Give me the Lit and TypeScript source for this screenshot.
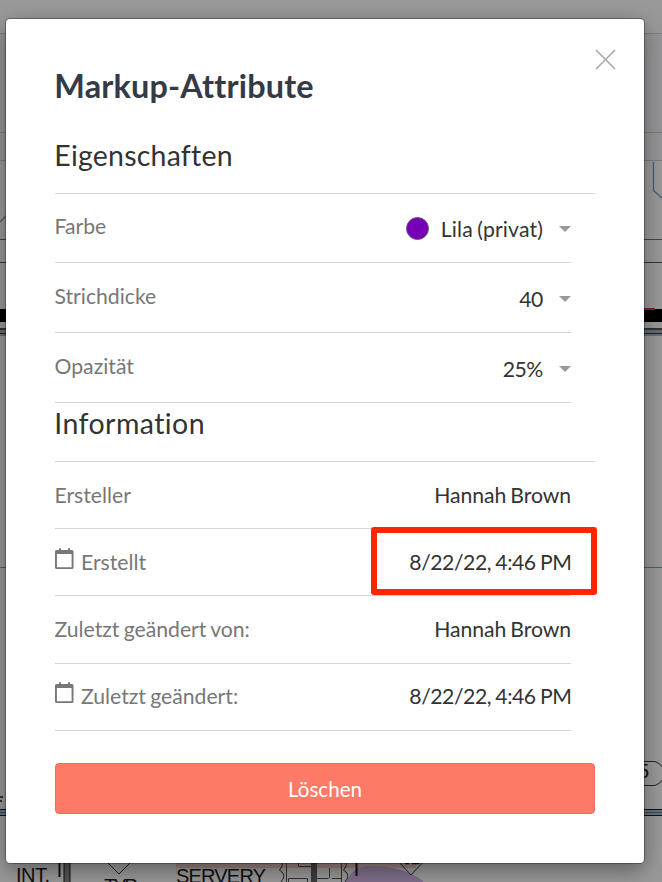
import { LitElement, html, css, svg, nothing } from "lit";
import { customElement, property } from "lit/decorators.js";

@customElement("plan-backdrop")
class PlanBackdrop extends LitElement {
  static styles = css`
    :host { display: block; }
    svg { display: block; width: 100%; height: 100%; }
    .label { font-family: "Liberation Sans", Arial, sans-serif; font-size: 20px; fill: #111; }
  `;

  private rule(y: number, h: number, fill: string) {
    return svg`<rect x="0" y=${y} width="662" height=${h} fill=${fill}></rect>`;
  }

  render() {
    return html`
      <svg viewBox="0 0 662 882">
        <rect width="662" height="882" fill="#999"></rect>
        <rect y="34" width="662" height="126" fill="#959597"></rect>
        ${this.rule(33, 1, "#7d7d80")}
        ${this.rule(132, 1, "#7c7c7e")}
        ${this.rule(160, 1, "#7c7c7e")}
        ${this.rule(239, 1, "#444")}
        ${this.rule(262, 1, "#333")}
        ${this.rule(309, 13, "#000")}
        <rect x="640" y="308" width="15" height="2" fill="#7a2226"></rect>
        ${this.rule(328, 2, "#333")}
        ${this.rule(330, 3, "#666c70")}
        ${this.rule(333, 1, "#222")}
        ${this.rule(334, 2, "#5f7180")}
        ${this.rule(567, 1, "#4a6178")}
        ${this.rule(809, 1, "#111")}
        ${this.rule(810, 5, "#66737c")}
        ${this.rule(812, 1, "#2c4c66")}
        ${this.rule(815, 1, "#111")}
        <path d="M653.5 162V190.500L662 198M0 222L8 214" fill="none" stroke="#425c77" stroke-width="1.300"></path>
        <path d="M640 761.500H655Q660 763 663 768M640 785.500H655Q660 784 663 779" fill="none" stroke="#222"></path>
        <text class="label" x="638" y="778">5</text>
        <path d="M0 797H3M0 801H2" stroke="#111" stroke-width="1.500"></path>
        <rect x="176" y="860" width="240" height="8" fill="#98807f"></rect>
        <path d="M346 882C351 872 357 866 370 866C390 866 410 870 424 882Z" fill="#806f8c"></path>
        <path d="M59.500 860V877" stroke="#111" stroke-width="2"></path>
        <rect x="64" y="860" width="6" height="22" fill="#555"></rect>
        <path d="M64 860V882M70 860V882" stroke="#111"></path>
        <path d="M105 860L119 874L133 860M397 860L411 875L425 860" fill="none" stroke="#222"></path>
        <path d="M405 863.500H409M412 863.500H419" stroke="#111" stroke-width="1.500"></path>
        <path d="M280 860Q284 864 281 868Q278 870 282 872Q286 876 281 882M344 860Q348 864 345 868Q342 870 346 872Q350 876 345 882" fill="none" stroke="#222"></path>
        <path d="M286.500 882V862M298.500 862V866.500H312M288.500 882V878.500H307.500V882M317 878.500H328.500M329.500 868V878M332 878.500H342M341.500 862V882" fill="none" stroke="#333"></path>
        <rect x="311" y="860" width="6" height="22" fill="#3c3c3c"></rect>
        <path d="M356.500 860V876" stroke="#111" stroke-width="2"></path>
        <text class="label" x="16" y="882" textLength="34">INT.</text>
        <text class="label" x="104" y="893" textLength="34">TYP.</text>
        <text class="label" x="176" y="883" textLength="90">SERVERY</text>
      </svg>
    `;
  }
}

@customElement("attribute-row")
class AttributeRow extends LitElement {
  @property() label = "";
  @property() value = "";
  @property() swatch = "";
  @property({ type: Boolean }) select = false;
  @property({ type: Boolean }) calendar = false;
  @property({ type: Boolean }) marked = false;

  static styles = css`
    :host {
      display: flex;
      position: relative;
      box-sizing: border-box;
      justify-content: space-between;
      align-items: center;
      margin-right: 24px;
      border-bottom: 1px solid #d6d6d6;
      font-size: 21.2px;
      line-height: 26px;
      word-spacing: -1.2px;
      color: #333;
    }
    .label { display: flex; margin-left: -0.5px; color: #777; }
    .cal { width: 19px; height: 22px; margin: -1px 7.5px 0 0; display: block; }
    .value { display: flex; align-items: center; }
    :host([select]) .label { margin-top: -4px; }
    :host([select]) .value { margin-top: 3px; }
    :host([swatch]) .value { margin-top: 2px; }
    .text { letter-spacing: -0.08px; }
    .date { letter-spacing: -0.46px; word-spacing: -0.7px; margin-right: -0.4px; }
    :host([select]:not([swatch])) .text { letter-spacing: -0.6px; margin-right: 0.4px; }
    :host([swatch]) .text { letter-spacing: 0.15px; }
    .dot {
      box-sizing: border-box;
      width: 23px;
      height: 23px;
      margin: -2px 12px 0 0;
      border-radius: 50%;
      border: 1px solid #6c5a80;
    }
    .caret {
      margin: -1px 0 0 16px;
      border: 6px solid transparent;
      border-top-color: #999;
      border-bottom: 0;
    }
    .mark {
      position: absolute;
      inset: -2px -25.5px 0 315.5px;
      border: 6px solid #fd2600;
      border-radius: 3px;
    }
  `;

  render() {
    return html`
      <div class="label">
        ${this.calendar
          ? html`<svg class="cal" viewBox="0 0 19 22">
              <path d="M4 1Q4 0 5 0T6 1V2H13V1Q13 0 14 0T15 1V2H17Q18.500 2 18.500 3.500V19.500Q18.500 21 17 21H1.500Q0 21 0 19.500V3.500Q0 2 1.500 2H4ZM1.900 6V19.200H16.600V6Z" fill="#777" fill-rule="evenodd"></path>
            </svg>`
          : nothing}
        <span class="name">${this.label}</span>
      </div>
      <div class="value">
        ${this.swatch ? html`<span class="dot" style="background:${this.swatch}"></span>` : nothing}
        <span class=${this.calendar ? "text date" : "text"}>${this.value}</span>
        ${this.select ? html`<span class="caret"></span>` : nothing}
      </div>
      ${this.marked ? html`<div class="mark"></div>` : nothing}
    `;
  }
}

@customElement("app-root")
class AppRoot extends LitElement {
  static styles = css`
    :host {
      display: flex;
      position: relative;
      box-sizing: border-box;
      width: 662px;
      height: 882px;
      padding: 19px 18px 19px 6px;
      overflow: hidden;
      font-family: Lato, "Open Sans", sans-serif;
      font-variant-ligatures: none;
    }
    plan-backdrop { position: absolute; inset: 0; }
    .modal {
      position: relative;
      flex: 1;
      box-sizing: border-box;
      padding: 0 49px;
      background: #fff;
      border-radius: 4px;
      box-shadow: 0 0 0 1px rgba(0, 0, 0, 0.3), 0 7px 22px rgba(0, 0, 0, 0.4);
    }
    .close { position: absolute; right: 28px; top: 29.5px; width: 21px; height: 21px; }
    h1, h2 { box-sizing: border-box; margin: 0; color: #343a46; }
    h1 span, h2 span { margin-left: -0.7px; }
    h1 { height: 104px; padding-top: 47px; font-size: 32.4px; line-height: 40px; font-weight: 700; letter-spacing: 0.18px; }
    h2 {
      border-bottom: 1px solid #d6d6d6;
      font-size: 28.5px;
      line-height: 36px;
      font-weight: 400;
      color: #333;
    }
    .props { height: 71px; padding-top: 14px; letter-spacing: 0.22px; }
    .info { height: 59px; padding-top: 2px; letter-spacing: 0.42px; }
    .h69 { height: 69px; }
    .h70 { height: 70px; }
    .h67 { height: 67px; }
    .h68 { height: 68px; }
    .up { padding-bottom: 2px; }
    .delete {
      display: block;
      box-sizing: border-box;
      width: 100%;
      height: 51px;
      margin-top: 32px;
      padding: 1px 0 0;
      border: 1px solid #e96e5e;
      border-radius: 4px;
      background: #ff7a66;
      color: #fff;
      font: 400 20.6px/48px Lato, sans-serif;
    }
  `;

  render() {
    return html`
      <plan-backdrop></plan-backdrop>
      <section class="modal">
        <svg class="close" viewBox="0 0 21 21">
          <path d="M1 1L20 20M20 1L1 20" stroke="#aaa" stroke-width="1.700"></path>
        </svg>
        <h1><span>Markup-Attribute</span></h1>
        <h2 class="props"><span>Eigenschaften</span></h2>
        <attribute-row class="h69" label="Farbe" value="Lila (privat)" swatch="#7500b8" select></attribute-row>
        <attribute-row class="h70" label="Strichdicke" value="40" select></attribute-row>
        <attribute-row class="h70" label="Opazität" value="25%" select></attribute-row>
        <h2 class="info"><span>Information</span></h2>
        <attribute-row class="h67" label="Ersteller" value="Hannah Brown"></attribute-row>
        <attribute-row class="h67" label="Erstellt" value="8/22/22, 4:46 PM" calendar marked></attribute-row>
        <attribute-row class="h68 up" label="Zuletzt geändert von:" value="Hannah Brown"></attribute-row>
        <attribute-row class="h67 up" label="Zuletzt geändert:" value="8/22/22, 4:46 PM" calendar></attribute-row>
        <button class="delete">Löschen</button>
      </section>
    `;
  }
}
